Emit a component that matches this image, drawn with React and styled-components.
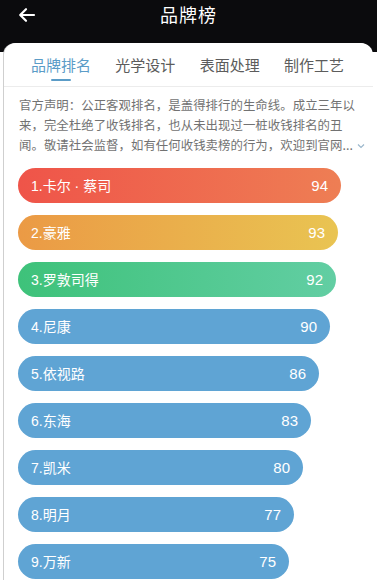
import React from 'react'
import styled, { createGlobalStyle } from 'styled-components'

const GlobalStyle = createGlobalStyle`
    html, body {
        margin: 0;
        padding: 0;
        background: #fff;
    }
    body {
        font-family: "Noto Sans CJK SC", "Liberation Sans", sans-serif;
    }
`

const Page = styled.div`
    width: 377px;
    height: 580px;
    overflow: hidden;
    background: linear-gradient(#0b0b0d 0, #0b0b0d 52px, #fff 52px);
    display: flex;
    flex-direction: column;
`
const Header = styled.div`
    height: 43px;
    position: relative;
    display: flex;
    align-items: flex-start;
    justify-content: center;
    color: #fff;
`
const Back = styled.div`
    position: absolute;
    left: 18px;
    top: 5px;
    width: 18px;
    height: 18px;
`
const Title = styled.div`
    font-size: 18px;
    line-height: 28px;
    letter-spacing: 1px;
`
const Card = styled.div`
    margin: 0 4px;
    flex: 1;
    background: #fff;
    border-radius: 12px 12px 0 0;
    box-shadow: -1px 0 0 #cfcfcf;
`
const Tabs = styled.div`
    display: flex;
    justify-content: space-between;
    padding: 0 29px 0 27px;
    height: 43px;
    border-bottom: 1px solid #ececec;
`
const Tab = styled.div`
    position: relative;
    font-size: 15px;
    line-height: 44px;
    color: ${p => (p.$active ? '#5b9cc7' : '#5c5c5c')};
    &::after {
        content: '';
        display: ${p => (p.$active ? 'block' : 'none')};
        position: absolute;
        left: 50%;
        bottom: 5px;
        width: 20px;
        height: 2px;
        margin-left: -10px;
        border-radius: 1px;
        background: #5b9cc7;
    }
`
const Notice = styled.div`
    padding: 9px 15px 0 15px;
    font-size: 12.4px;
    line-height: 19.5px;
    color: #727272;
    letter-spacing: 0.05px;
`
const Line = styled.div`
    white-space: nowrap;
`
const More = styled.span`
    display: inline-block;
    margin-left: 4px;
    vertical-align: 1px;
`
const List = styled.div`
    padding: 12px 0 0 14px;
    display: flex;
    flex-direction: column;
    gap: 12px;
`
const Bar = styled.div`
    height: 35px;
    border-radius: 18px;
    display: flex;
    align-items: center;
    justify-content: space-between;
    padding: 0 13px 0 13px;
    box-sizing: border-box;
    color: #fff;
    font-size: 14px;
    background: ${p => p.$bg};
`
const Name = styled.span`
    font-family: "Liberation Sans", "Noto Sans CJK SC", sans-serif;
`
const Score = styled.span`
    font-family: "Liberation Sans", sans-serif;
    font-size: 15px;
`

const blue = '#5fa4d4'
const brands = [
    { name: '卡尔 · 蔡司', score: 94, bg: 'linear-gradient(90deg, #ef5449, #ee7e54)' },
    { name: '豪雅', score: 93, bg: 'linear-gradient(90deg, #eb9a45, #e9c452)' },
    { name: '罗敦司得', score: 92, bg: 'linear-gradient(90deg, #3ec27a, #62cea3)' },
    { name: '尼康', score: 90, bg: blue },
    { name: '依视路', score: 86, bg: blue },
    { name: '东海', score: 83, bg: blue },
    { name: '凯米', score: 80, bg: blue },
    { name: '明月', score: 77, bg: blue },
    { name: '万新', score: 75, bg: blue },
]

const tabs = ['品牌排名', '光学设计', '表面处理', '制作工艺']

const App = () => {
    return (
        <Page>
            <GlobalStyle />
            <Header>
                <Back>
                    <svg width="18" height="18" viewBox="0 0 18 18" fill="none" stroke="#fff" strokeWidth="2.2" strokeLinecap="round" strokeLinejoin="round">
                        <path d="M16 9H2.5M8 3.2 2.2 9 8 14.8" />
                    </svg>
                </Back>
                <Title>品牌榜</Title>
            </Header>
            <Card>
                <Tabs>
                    {tabs.map((t, i) => (
                        <Tab key={t} $active={i === 0}>{t}</Tab>
                    ))}
                </Tabs>
                <Notice>
                    <Line>官方声明：公正客观排名，是盖得排行的生命线。成立三年以</Line>
                    <Line>来，完全杜绝了收钱排名，也从未出现过一桩收钱排名的丑</Line>
                    <Line>
                        闻。敬请社会监督，如有任何收钱卖榜的行为，欢迎到官网...
                        <More>
                            <svg width="8" height="6" viewBox="0 0 8 6" fill="none" stroke="#9bb7cc" strokeWidth="1.2">
                                <path d="M1 1.5 4 4.5 7 1.5" />
                            </svg>
                        </More>
                    </Line>
                </Notice>
                <List>
                    {brands.map((b, i) => (
                        <Bar key={b.name} $bg={b.bg} style={{ width: Math.round(b.score * 2.74 + 65.5) }}>
                            <Name>{i + 1}.{b.name}</Name>
                            <Score>{b.score}</Score>
                        </Bar>
                    ))}
                </List>
            </Card>
        </Page>
    )
}

export default App
